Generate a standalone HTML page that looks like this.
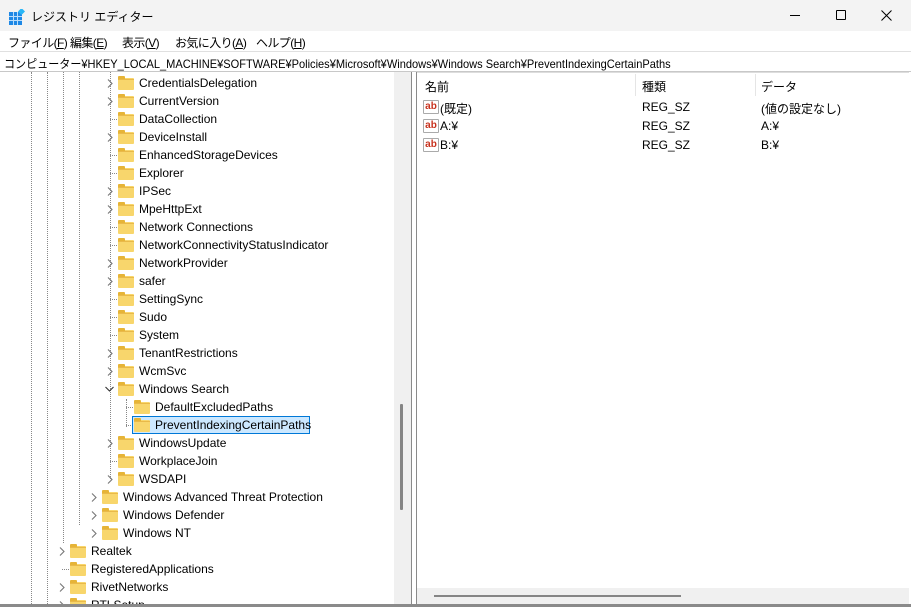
<!DOCTYPE html>
<html><head><meta charset="utf-8"><style>
*{margin:0;padding:0;box-sizing:border-box}
body{width:911px;height:607px;overflow:hidden;background:#fff;font-family:"Liberation Sans","Noto Sans CJK JP",sans-serif;font-size:12px;color:#000;position:relative}
.abs{position:absolute}
.title{left:0;top:0;width:911px;height:31px;background:#f3f3f3}
.menu{left:0;top:31px;width:911px;height:20px;background:#fff}
.menu span{position:absolute;top:3px;white-space:nowrap;letter-spacing:-0.6px}
.addr{left:0;top:51px;width:911px;height:21px;border-top:1px solid #e0e0e0;border-bottom:1px solid #c8c8c8;background:#fff;white-space:nowrap}
.addr span{position:absolute;left:4px;top:3px;transform:scaleX(0.921);transform-origin:0 0}
.tree{left:0;top:72px;width:394px;height:532px;overflow:hidden;background:#fff}
.fold{position:absolute;width:16px;height:12px;background:#f8d66c;border-radius:1px}
.fold:before{content:"";position:absolute;left:0;top:-2px;width:7px;height:3px;background:#e6b437;border-radius:1px 1px 0 0}
.fold:after{content:"";position:absolute;left:0;top:1px;width:16px;height:1px;background:#e9b949}
.txt{position:absolute;white-space:nowrap}
.vd{position:absolute;width:1px;border-left:1px dotted #888}
.hd{position:absolute;height:1px;border-top:1px dotted #888}
.sel{position:absolute;background:#cce8ff;border:1px solid #0078d7}
.ab{position:absolute;width:16px;height:14px;border:1px solid #aaa;border-radius:1px;background:#fff;color:#c8321e;font-weight:bold;font-size:10px;line-height:11px;text-align:center}
</style></head><body>
<div class="abs title">
 <svg class="abs" style="left:9px;top:9px" width="16" height="16" viewBox="0 0 16 16">
  <rect x="0" y="3" width="13" height="13" fill="#1e88e5"/>
  <g stroke="#bbdefb" stroke-width="1"><line x1="4.5" y1="3" x2="4.5" y2="16"/><line x1="8.5" y1="3" x2="8.5" y2="16"/><line x1="0" y1="7.5" x2="13" y2="7.5"/><line x1="0" y1="11.5" x2="13" y2="11.5"/></g>
  <rect x="10" y="0" width="5" height="5" fill="#29b6f6" transform="rotate(45 12.5 2.5)"/>
 </svg>
 <span class="abs" style="left:31px;top:8px">レジストリ エディター</span>
 <div class="abs" style="left:790px;top:15px;width:10px;height:1px;background:#000"></div>
 <div class="abs" style="left:836px;top:10px;width:10px;height:10px;border:1px solid #000;border-radius:1px"></div>
 <svg class="abs" style="left:881px;top:10px" width="11" height="11"><path d="M0.5 0.5L10.5 10.5M10.5 0.5L0.5 10.5" stroke="#000" stroke-width="1"/></svg>
</div>
<div class="abs menu">
 <span style="left:8px">ファイル(<u>F</u>)</span>
 <span style="left:70px">編集(<u>E</u>)</span>
 <span style="left:122px">表示(<u>V</u>)</span>
 <span style="left:175px">お気に入り(<u>A</u>)</span>
 <span style="left:256px">ヘルプ(<u>H</u>)</span>
</div>
<div class="abs addr"><span>コンピューター¥HKEY_LOCAL_MACHINE¥SOFTWARE¥Policies¥Microsoft¥Windows¥Windows Search¥PreventIndexingCertainPaths</span></div>

<div class="abs tree" id="tree">
 <div class="vd" style="left:31px;top:0;height:532px"></div>
 <div class="vd" style="left:47px;top:0;height:532px"></div>
 <div class="vd" style="left:63px;top:0;height:471px"></div>
 <div class="vd" style="left:79px;top:0;height:453px"></div>
 <div class="vd" style="left:110px;top:0;height:407px"></div>
 <div class="vd" style="left:126px;top:327px;height:28px"></div>
</div>

<div class="abs" style="left:394px;top:72px;width:17px;height:532px;background:#f0f0f0"></div>
<div class="abs" style="left:400px;top:404px;width:3px;height:106px;background:#858585;border-radius:1px"></div>
<div class="abs" style="left:411px;top:72px;width:1px;height:535px;background:#8a8a8a"></div>
<div class="abs" style="left:416px;top:72px;width:1px;height:535px;background:#8a8a8a"></div>
<div class="abs" style="left:0;top:604px;width:911px;height:3px;background:#8a8a8a"></div>

<div class="abs" style="left:417px;top:72px;width:492px;height:532px;background:#fff">
 <div class="abs" style="left:0;top:0;width:492px;height:24px;border-top:1px solid #ddd"></div>
 <span class="abs" style="left:8px;top:6px">名前</span>
 <div class="abs" style="left:218px;top:2px;width:1px;height:22px;background:#e5e5e5"></div>
 <span class="abs" style="left:225px;top:6px">種類</span>
 <div class="abs" style="left:338px;top:2px;width:1px;height:22px;background:#e5e5e5"></div>
 <span class="abs" style="left:344px;top:6px">データ</span>
 <div class="ab" style="left:6px;top:28px">ab</div><span class="abs" style="left:23px;top:28px">(既定)</span><span class="abs" style="left:225px;top:28px">REG_SZ</span><span class="abs" style="left:344px;top:28px">(値の設定なし)</span>
 <div class="ab" style="left:6px;top:47px">ab</div><span class="abs" style="left:23px;top:47px">A:¥</span><span class="abs" style="left:225px;top:47px">REG_SZ</span><span class="abs" style="left:344px;top:47px">A:¥</span>
 <div class="ab" style="left:6px;top:66px">ab</div><span class="abs" style="left:23px;top:66px">B:¥</span><span class="abs" style="left:225px;top:66px">REG_SZ</span><span class="abs" style="left:344px;top:66px">B:¥</span>
 <div class="abs" style="left:0;top:516px;width:492px;height:16px;background:#f0f0f0"></div>
 <div class="abs" style="left:17px;top:523px;width:247px;height:2px;background:#858585"></div>
</div>

<script>
var rows=[
["CredentialsDelegation",118,"c"],["CurrentVersion",118,"c"],["DataCollection",118,"d"],["DeviceInstall",118,"c"],
["EnhancedStorageDevices",118,"d"],["Explorer",118,"d"],["IPSec",118,"c"],["MpeHttpExt",118,"c"],
["Network Connections",118,"d"],["NetworkConnectivityStatusIndicator",118,"d"],["NetworkProvider",118,"c"],["safer",118,"c"],
["SettingSync",118,"d"],["Sudo",118,"d"],["System",118,"d"],["TenantRestrictions",118,"c"],["WcmSvc",118,"c"],
["Windows Search",118,"o"],["DefaultExcludedPaths",134,"d"],["PreventIndexingCertainPaths",134,"s"],
["WindowsUpdate",118,"c"],["WorkplaceJoin",118,"d"],["WSDAPI",118,"c"],
["Windows Advanced Threat Protection",102,"c"],["Windows Defender",102,"c"],["Windows NT",102,"c"],
["Realtek",70,"c"],["RegisteredApplications",70,"d"],["RivetNetworks",70,"c"],["RTLSetup",70,"c"]];
var t=document.getElementById('tree'),h='';
rows.forEach(function(r,i){
 var y=2+18*i,fx=r[1],k=r[2];
 if(k=="d"||k=="s")h+='<div class="hd" style="left:'+(fx-8)+'px;top:'+(y+9)+'px;width:7px"></div>';
 if(k=="s")h+='<div class="sel" style="left:'+(fx-2)+'px;top:'+y+'px;width:178px;height:18px"></div>';
 if(k=="c")h+='<svg style="position:absolute;left:'+(fx-11)+'px;top:'+(y+5)+'px" width="6" height="9"><path d="M1 0.5L5 4.5L1 8.5" fill="none" stroke="#777" stroke-width="1.1"/></svg>';
 if(k=="o")h+='<svg style="position:absolute;left:'+(fx-13)+'px;top:'+(y+6)+'px" width="9" height="6"><path d="M0.5 1L4.5 5L8.5 1" fill="none" stroke="#333" stroke-width="1.1"/></svg>';
 h+='<div class="fold" style="left:'+fx+'px;top:'+(y+4)+'px"></div>';
 h+='<span class="txt" style="left:'+(fx+21)+'px;top:'+(y+2)+'px">'+r[0]+'</span>';
});
t.insertAdjacentHTML('beforeend',h);
</script>
</body></html>
